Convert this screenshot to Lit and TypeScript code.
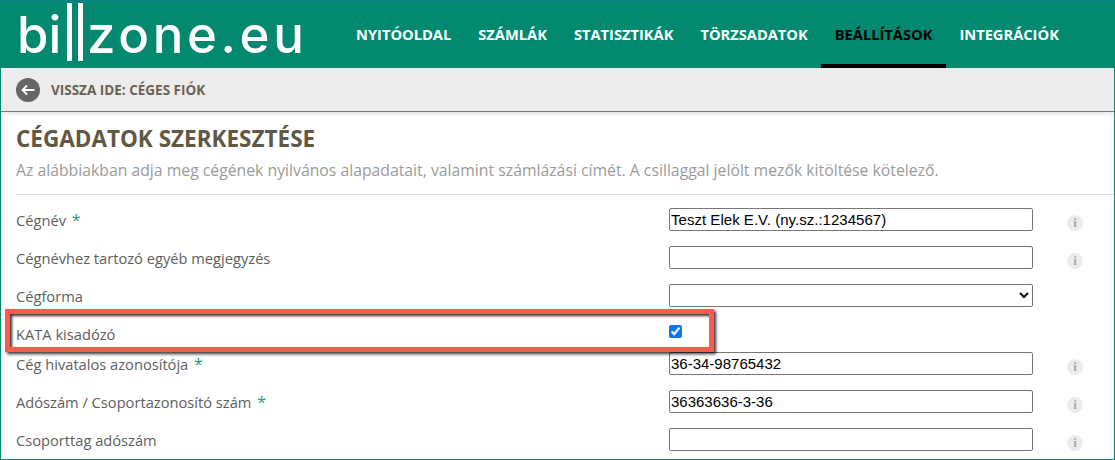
import { LitElement, html, css } from "lit";
import { customElement } from "lit/decorators.js";

type Row = { label: string; req?: boolean; value?: string; kind: "text" | "select" | "check"; info?: boolean; tight?: boolean };
const rows: Row[] = [
  { label: "Cégnév", req: true, value: "Teszt Elek E.V. (ny.sz.:1234567)", kind: "text", info: true, tight: true },
  { label: "Cégnévhez tartozó egyéb megjegyzés", value: "", kind: "text", info: true },
  { label: "Cégforma", kind: "select" },
  { label: "KATA kisadózó", kind: "check" },
  { label: "Cég hivatalos azonosítója", req: true, value: "36-34-98765432", kind: "text", info: true },
  { label: "Adószám / Csoportazonosító szám", req: true, value: "36363636-3-36", kind: "text", info: true },
  { label: "Csoporttag adószám", value: "", kind: "text", info: true },
];
const nav = ["Nyitóoldal", "Számlák", "Statisztikák", "Törzsadatok", "Beállítások", "Integrációk"];

@customElement("app-root")
export class AppRoot extends LitElement {
  static styles = css`
    :host {
      display: block; position: relative; width: 1115px; height: 460px; box-sizing: border-box;
      overflow: hidden; background: #fff; font-family: "Open Sans", sans-serif;
      border: 1px solid #038970; border-top-color: #0a7c84;
    }
    .header { display: flex; height: 67px; background: #038970; align-items: stretch; }
    .logo {
      display: flex; align-items: flex-start; width: 341.5px; flex: none; padding-left: 16px; box-sizing: border-box;
      color: #fff; font-family: Inter, sans-serif; font-weight: 500; font-size: 51px; line-height: 67px;
    }
    .logo .bi { flex: none; width: 50px; }
    .logo .txt { letter-spacing: 3.6px; }
    .bars { display: flex; gap: 6px; margin: 2px 4px 0 0; flex: none; }
    .bars i { display: block; width: 5px; height: 58px; background: #fff; }
    .nav { display: flex; }
    .nav a {
      padding: 0 13.5px; height: 67px; box-sizing: border-box; line-height: 67px;
      font-weight: 700; font-size: 14.67px; color: #fff; text-transform: uppercase;
    }
    .nav a.active { color: #000; border-bottom: 4px solid #000; }
    .sub {
      display: flex; align-items: center; gap: 11px; height: 44px; box-sizing: border-box; padding: 0 0 0 15px;
      background: #ececec; border-bottom: 1px solid #777; box-shadow: 0 2px 4px rgba(0, 0, 0, 0.12);
      font-weight: 700; font-size: 13.5px; color: #6b6152; text-transform: uppercase;
    }
    .sub svg { display: block; }
    .main { padding: 11px 0 0 15px; }
    h1 { margin: 0; font-size: 22.5px; line-height: 32px; font-weight: 700; color: #5f5845; text-transform: uppercase; }
    .lead { margin: 4px 0 0; font-size: 15.77px; line-height: 22px; color: #9b9b9b; white-space: nowrap; }
    hr { margin: 13px 0 0; border: 0; border-top: 1px solid #dcdcdc; }
    .form { margin-top: 13px; }
    .row { display: grid; grid-template-columns: 653px 364px 50px; height: 38px; align-items: start; }
    .row.check { height: 30px; }
    .label { font-size: 14.67px; line-height: 24px; color: #5e5e5e; }
    .req { color: #2a9a85; margin-left: 2px; font-size: 16px; }
    input[type="text"], select {
      display: block; box-sizing: border-box; width: 364px; height: 23px; margin: 0; padding: 0 1px;
      font: 15px "Liberation Sans", Arial, sans-serif; color: #000; background: #fff;
      border: 1px solid #767676; border-radius: 2px;
    }
    input.tight { letter-spacing: 0.03px; }
    input[type="checkbox"] { display: block; width: 13px; height: 13px; margin: 3px 0 0 0; accent-color: #0a76f6; }
    .info {
      justify-self: end; width: 16px; height: 16px; margin-top: 7px; border-radius: 50%; background: #ececec;
      color: #a8a8a8; font: 700 13px/16px "Liberation Serif", serif; text-align: center;
    }
    .mark {
      position: absolute; left: 4px; top: 308px; width: 709px; height: 43px; box-sizing: border-box;
      border: 5px solid #fb5a4c; pointer-events: none;
      box-shadow: 2px 2px 3px rgba(0, 0, 0, 0.8), inset 2px 2px 3px rgba(0, 0, 0, 0.8);
    }
  `;

  private row(r: Row) {
    return html`<div class="row ${r.kind === "check" ? "check" : ""}">
      <div class="label">${r.label}${r.req ? html` <span class="req">*</span>` : ""}</div>
      <div>
        ${r.kind === "text" ? html`<input type="text" class=${r.tight ? "tight" : ""} .value=${r.value ?? ""} />` : ""}
        ${r.kind === "select" ? html`<select><option></option></select>` : ""}
        ${r.kind === "check" ? html`<input type="checkbox" checked />` : ""}
      </div>
      ${r.info ? html`<div class="info">i</div>` : html`<div></div>`}
    </div>`;
  }

  render() {
    return html`
      <div class="header">
        <div class="logo">
          <span class="bi">bi</span>
          <span class="bars"><i></i><i></i></span>
          <span class="txt">zone.eu</span>
        </div>
        <div class="nav">
          ${nav.map((n) => html`<a class=${n === "Beállítások" ? "active" : ""}><span>${n}</span></a>`)}
        </div>
      </div>
      <div class="sub">
        <svg width="24" height="24" viewBox="0 0 24 24">
          <circle cx="12" cy="12" r="12" fill="#666" />
          <path d="M18.5 12H6.5M11 7.5L6.5 12L11 16.5" fill="none" stroke="#fff" stroke-width="1.8" />
        </svg>
        <span>Vissza ide: céges fiók</span>
      </div>
      <div class="main">
        <h1>Cégadatok szerkesztése</h1>
        <p class="lead">Az alábbiakban adja meg cégének nyilvános alapadatait, valamint számlázási címét. A csillaggal jelölt mezők kitöltése kötelező.</p>
        <hr />
        <div class="form">${rows.map((r) => this.row(r))}</div>
      </div>
      <div class="mark"></div>
    `;
  }
}
